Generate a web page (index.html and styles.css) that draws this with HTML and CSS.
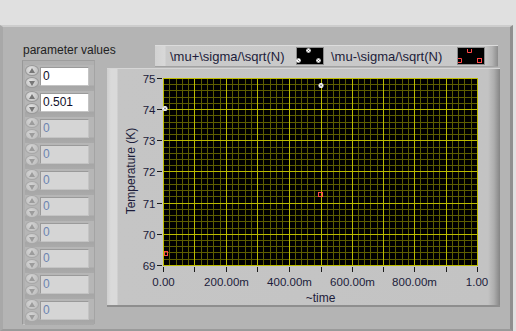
FILE: index.html
```html
<!DOCTYPE html>
<html lang="en">
  <head>
    <meta charset="UTF-8" />
    <meta name="viewport" content="width=device-width, initial-scale=1.0" />
    <title>Temperature</title>
    <link rel="stylesheet" href="styles.css">
  </head>
  <body>
    <div class="topbar"></div>
    <div class="panel">
      <div class="params">
        <div class="params-label">parameter values</div>
        <div class="array">
          <div class="elem"><div class="spin"><span class="btn up"></span><span class="btn down"></span></div><div class="field on">0</div></div>
          <div class="elem"><div class="spin"><span class="btn up"></span><span class="btn down"></span></div><div class="field on">0.501</div></div>
          <div class="elem off"><div class="spin"><span class="btn up"></span><span class="btn down"></span></div><div class="field">0</div></div>
          <div class="elem off"><div class="spin"><span class="btn up"></span><span class="btn down"></span></div><div class="field">0</div></div>
          <div class="elem off"><div class="spin"><span class="btn up"></span><span class="btn down"></span></div><div class="field">0</div></div>
          <div class="elem off"><div class="spin"><span class="btn up"></span><span class="btn down"></span></div><div class="field">0</div></div>
          <div class="elem off"><div class="spin"><span class="btn up"></span><span class="btn down"></span></div><div class="field">0</div></div>
          <div class="elem off"><div class="spin"><span class="btn up"></span><span class="btn down"></span></div><div class="field">0</div></div>
          <div class="elem off"><div class="spin"><span class="btn up"></span><span class="btn down"></span></div><div class="field">0</div></div>
          <div class="elem off"><div class="spin"><span class="btn up"></span><span class="btn down"></span></div><div class="field">0</div></div>
        </div>
      </div>

      <div class="chart">
        <div class="legend">
          <span class="legend-name">\mu+\sigma/\sqrt(N)</span>
          <svg class="swatch" width="28" height="18" viewBox="0 0 28 18">
            <rect x="0.5" y="0.5" width="27" height="17" fill="#000" stroke="#8c8c8c"/>
            <circle cx="12.5" cy="3.5" r="2.3" fill="#fff"/>
            <circle cx="2.5" cy="13.5" r="2.3" fill="#fff"/>
            <circle cx="22.5" cy="13.5" r="2.3" fill="#fff"/>
            <path d="M11.5 2.5l2 2M13.5 2.5l-2 2M21.5 12.5l2 2M23.5 12.5l-2 2M1.5 12.5l2 2" stroke="#555" stroke-width="0.8"/>
          </svg>
          <span class="legend-name second">\mu-\sigma/\sqrt(N)</span>
          <svg class="swatch" width="28" height="18" viewBox="0 0 28 18">
            <rect x="0.5" y="0.5" width="27" height="17" fill="#000" stroke="#8c8c8c"/>
            <path d="M10.5 2V5.5H14.5V2M1 11.5H4.5V15.5H1" fill="none" stroke="#ff4848"/>
            <rect x="20.5" y="11.5" width="4" height="4" fill="none" stroke="#ff4848"/>
          </svg>
        </div>

        <div class="graph">
          <svg class="plot" width="393" height="239" viewBox="0 0 393 239">
            <rect x="56" y="10" width="315" height="188" fill="#000"/>
            <g transform="translate(56 10)" shape-rendering="crispEdges">
              <path stroke="#5e5e00" d="M6.5 0V188M13.5 0V188M19.5 0V188M25.5 0V188M38.5 0V188M44.5 0V188M50.5 0V188M57.5 0V188M69.5 0V188M75.5 0V188M82.5 0V188M88.5 0V188M100.5 0V188M107.5 0V188M113.5 0V188M119.5 0V188M132.5 0V188M138.5 0V188M144.5 0V188M151.5 0V188M164.5 0V188M170.5 0V188M176.5 0V188M182.5 0V188M195.5 0V188M201.5 0V188M207.5 0V188M214.5 0V188M226.5 0V188M232.5 0V188M239.5 0V188M245.5 0V188M257.5 0V188M264.5 0V188M270.5 0V188M276.5 0V188M289.5 0V188M295.5 0V188M301.5 0V188M308.5 0V188
                M0 6.5H315M0 12.5H315M0 19.5H315M0 25.5H315M0 37.5H315M0 44.5H315M0 50.5H315M0 56.5H315M0 69.5H315M0 75.5H315M0 81.5H315M0 87.5H315M0 100.5H315M0 106.5H315M0 112.5H315M0 118.5H315M0 131.5H315M0 137.5H315M0 143.5H315M0 150.5H315M0 162.5H315M0 168.5H315M0 174.5H315M0 181.5H315"/>
              <path stroke="#bcbc00" d="M0.5 0V188M31.5 0V188M63.5 0V188M94.5 0V188M126.5 0V188M158.5 0V188M189.5 0V188M220.5 0V188M251.5 0V188M283.5 0V188M314.5 0V188
                M0 0.5H315M0 31.5H315M0 62.5H315M0 93.5H315M0 125.5H315M0 156.5H315M0 187.5H315"/>
            </g>

            <g class="ticks" stroke="#1a1a1a" shape-rendering="crispEdges">
              <path d="M50 10.5H55M50 41.5H55M50 72.5H55M50 103.5H55M50 135.5H55M50 166.5H55M50 197.5H55"/>
              <path d="M56.5 199V204M87.5 199V204M119.5 199V204M150.5 199V204M182.5 199V204M214.5 199V204M245.5 199V204M276.5 199V204M307.5 199V204M339.5 199V204M370.5 199V204"/>
            </g>

            <g class="axis-num" text-anchor="end">
              <text x="48.5" y="15">75</text>
              <text x="48.5" y="46">74</text>
              <text x="48.5" y="77">73</text>
              <text x="48.5" y="108">72</text>
              <text x="48.5" y="140">71</text>
              <text x="48.5" y="171">70</text>
              <text x="48.5" y="202">69</text>
            </g>
            <g class="axis-num" text-anchor="middle">
              <text x="56.5" y="218">0.00</text>
              <text x="119.5" y="218">200.00m</text>
              <text x="182.5" y="218">400.00m</text>
              <text x="245.5" y="218">600.00m</text>
              <text x="307.5" y="218">800.00m</text>
              <text x="370" y="218">1.00</text>
            </g>
            <text class="axis-title" x="213.5" y="234" text-anchor="middle">~time</text>
            <text class="axis-title" transform="translate(28 103) rotate(-90)" text-anchor="middle">Temperature (K)</text>

            <g class="points">
              <circle cx="214" cy="17.5" r="2.5" fill="#fff"/>
              <circle cx="58" cy="40.5" r="2.5" fill="#fff"/>
              <path d="M213 16.5l2 2M215 16.5l-2 2M57 39.5l2 2M59 39.5l-2 2" stroke="#444" stroke-width="0.8"/>
              <rect x="211.5" y="124.5" width="4" height="4" fill="none" stroke="#ff4848"/>
              <rect x="57.5" y="183.5" width="3" height="4" fill="none" stroke="#ff4848"/>
            </g>
          </svg>
        </div>
      </div>
    </div>
  </body>
</html>
```

FILE: styles.css
```css
* {
  margin: 0px;
  padding: 0px;
  box-sizing: border-box;
}
body {
  width: 516px;
  height: 331px;
  overflow: hidden;
  background-color: #e0e0e0;
  font-family: "Liberation Sans", Arial, sans-serif;
  color: #1c1c3a;
}
.topbar {
  height: 25px;
}
.panel {
  display: flex;
  align-items: flex-start;
  width: 513px;
  height: 306px;
  background-color: #b4b4b4;
  border-top: 2px solid #cdcdcd;
  border-left: 3px solid #a8a8a8;
  border-right: 3px solid #8f8f8f;
  border-bottom: 2px solid #9a9a9a;
  padding: 16px 0 0 19px;
}

/* parameter array */
.params {
  width: 73px;
}
.params-label {
  font-size: 12px;
  line-height: 14px;
  height: 14px;
  margin-left: 1px;
  white-space: nowrap;
  color: #222;
}
.array {
  margin-top: 3px;
  height: 265px;
  background-color: #b0b0b0;
  border-left: 1px solid #989898;
  border-top: 1px solid #9e9e9e;
  border-bottom: 1px solid #c4c4c4;
  border-right: 1px solid #a4a4a4;
  padding: 4px 0 0 2px;
}
.elem {
  display: flex;
  height: 26px;
  background: linear-gradient(#b6b6b6 0, #b6b6b6 20px, #a6a6a6 21px, #aaaaaa 26px);
}
.spin {
  width: 15px;
  height: 24px;
  display: flex;
  flex-direction: column;
  gap: 1px;
}
.btn {
  position: relative;
  display: block;
  width: 14px;
  height: 11px;
  border-radius: 50%;
  border: 1px solid #9a9a9a;
  background: radial-gradient(circle at 40% 35%, #e2e2e2, #b8b8b8);
}
.btn::after {
  content: "";
  position: absolute;
  left: 3px;
  top: 2px;
  border-left: 3px solid transparent;
  border-right: 3px solid transparent;
}
.up::after {
  border-bottom: 5px solid #777;
}
.down::after {
  top: 3px;
  border-top: 5px solid #777;
}
.off .btn {
  border-color: #a8a8a8;
  background: radial-gradient(circle at 40% 35%, #d4d4d4, #bababa);
}
.off .up::after {
  border-bottom-color: #9c9c9c;
}
.off .down::after {
  border-top-color: #9c9c9c;
}
.field {
  margin-top: 2px;
  width: 49px;
  height: 19px;
  padding-left: 2px;
  font-size: 12px;
  line-height: 17px;
  background-color: #d5d5d5;
  color: #6c84b0;
  border: 1px solid;
  border-color: #9a9a9a #c4c4c4 #c4c4c4 #9a9a9a;
}
.field.on {
  background-color: #ffffff;
  color: #10102a;
}

/* chart */
.chart {
  margin-left: 12px;
  margin-top: 2px;
}
.legend {
  display: flex;
  align-items: center;
  margin-left: 48px;
  width: 343px;
  height: 22px;
  padding-left: 15px;
  font-size: 13px;
  white-space: nowrap;
  background: linear-gradient(to right, #d2d2d2 0, #d8d8d8 10px, #cacaca 11px, #c8c8c8 calc(100% - 13px), #b4b4b4 calc(100% - 6px), #8c8c8c 100%);
  border-top: 1px solid #dcdcdc;
  border-bottom: 1px solid #a2a2a2;
}
.legend-name {
  width: 126px;
}
.legend-name.second {
  margin-left: 7px;
}
.swatch {
  display: block;
}
.graph {
  margin-top: 1px;
  width: 393px;
  height: 239px;
  background: linear-gradient(to right, #cfcfcf 0, #dadada 4px, #dadada 10px, #c5c5c5 11px, #c3c3c3 calc(100% - 12px), #adadad calc(100% - 6px), #858585 100%);
  border-top: 1px solid #d6d6d6;
  border-bottom: 2px solid #8e8e8e;
}
.plot {
  display: block;
  margin-top: -1px;
}
.axis-num {
  font-size: 11.5px;
  fill: #1c1c3a;
}
.axis-title {
  font-size: 12px;
  fill: #1c1c3a;
}
```
